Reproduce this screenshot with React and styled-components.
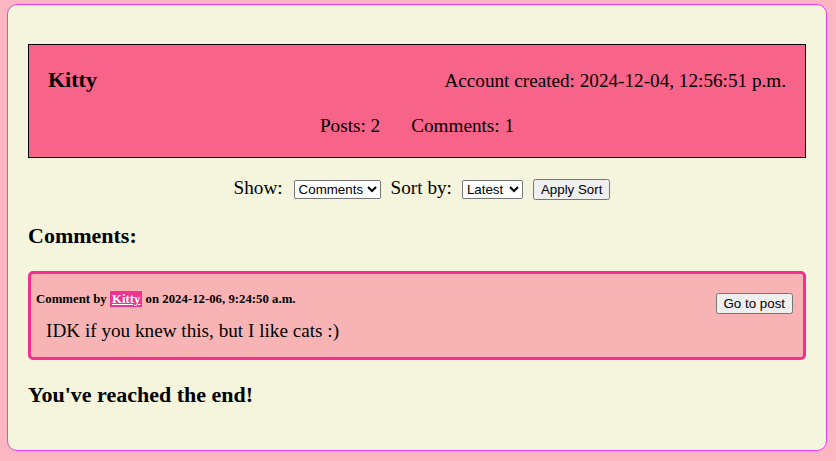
import React from "react";
import styled, { createGlobalStyle } from "styled-components";

const Global = createGlobalStyle`
  html, body { margin: 0; padding: 0; }
  body {
    background: #fbb6c1;
    font-family: "Liberation Serif", "Times New Roman", serif;
    color: #000;
  }
`;

const Page = styled.div`
  box-sizing: border-box;
  width: 820px;
  margin: 4px 9px 10px 7px;
  padding: 39px 20px 42px;
  background: #f4f5dc;
  border: 1px solid #f03cf0;
  border-radius: 10px;
`;

const ProfileHeader = styled.section`
  border: 1px solid #000;
  background: #f76389;
  padding: 22px 19px 20px;
  display: flex;
  flex-direction: column;
  gap: 21px;
`;

const TopRow = styled.div`
  display: flex;
  justify-content: space-between;
  align-items: baseline;
  line-height: 26px;
`;

const Username = styled.span`
  font-size: 22px;
  font-weight: bold;
`;

const Created = styled.span`
  font-size: 19.2px;
`;

const Stats = styled.div`
  display: flex;
  justify-content: center;
  gap: 31px;
  font-size: 19.2px;
  line-height: 22px;
`;

const Controls = styled.div`
  display: flex;
  justify-content: center;
  align-items: baseline;
  margin-top: 19px;
  padding-left: 10px;
  font-size: 19.2px;
  line-height: 22px;
`;

const Label = styled.span`
  margin-right: ${(p) => p.$gap || 10}px;
`;

const Select = styled.select`
  font-family: "Liberation Sans", Arial, sans-serif;
  font-size: 13.333px;
  margin-right: ${(p) => p.$gap || 10}px;
`;

const Button = styled.button`
  font-family: "Liberation Sans", Arial, sans-serif;
  font-size: 13.333px;
`;

const Heading = styled.h2`
  font-size: 22px;
  font-weight: bold;
  line-height: 26px;
  margin: ${(p) => p.$margin};
`;

const Card = styled.article`
  border: 3px solid #f72d8f;
  border-radius: 5px;
  background: #f8b4b4;
  padding: 18px 10px 15px 5px;
`;

const CardHead = styled.div`
  display: flex;
  justify-content: space-between;
  align-items: flex-start;
`;

const Meta = styled.div`
  font-size: 12.8px;
  font-weight: bold;
  line-height: 15px;
`;

const UserTag = styled.a`
  background: #f0338e;
  color: #fff;
  text-decoration: underline;
  padding: 1px 2px;
`;

const PostButton = styled(Button)`
  margin-top: 1px;
`;

const Body = styled.p`
  margin: 6px 0 0 10px;
  font-size: 19.2px;
  line-height: 22px;
`;

export default function App() {
  return (
    <>
      <Global />
      <Page>
        <ProfileHeader>
          <TopRow>
            <Username>Kitty</Username>
            <Created>Account created: 2024-12-04, 12:56:51 p.m.</Created>
          </TopRow>
          <Stats>
            <span>Posts: 2</span>
            <span>Comments: 1</span>
          </Stats>
        </ProfileHeader>
        <Controls>
          <Label $gap={11}>Show:</Label>
          <Select defaultValue="comments">
            <option value="posts">Posts</option>
            <option value="comments">Comments</option>
          </Select>
          <Label $gap={10}>Sort by:</Label>
          <Select $gap={10} defaultValue="latest">
            <option value="latest">Latest</option>
            <option value="oldest">Oldest</option>
          </Select>
          <Button>Apply Sort</Button>
        </Controls>
        <Heading $margin="23px 0 22px">Comments:</Heading>
        <Card>
          <CardHead>
            <Meta>
              Comment by <UserTag>Kitty</UserTag> on 2024-12-06, 9:24:50 a.m.
            </Meta>
            <PostButton>Go to post</PostButton>
          </CardHead>
          <Body>IDK if you knew this, but I like cats :)</Body>
        </Card>
        <Heading $margin="22px 0 0">You've reached the end!</Heading>
      </Page>
    </>
  );
}
